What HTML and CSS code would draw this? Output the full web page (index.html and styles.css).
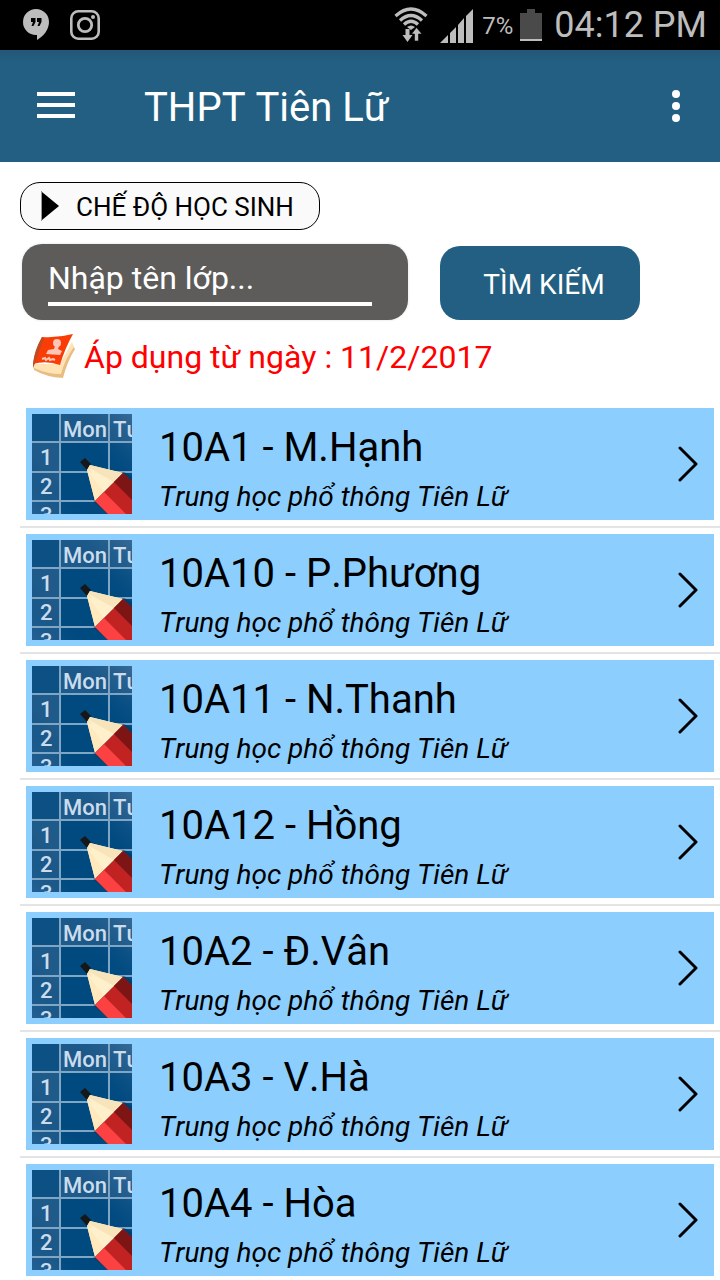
FILE: index.html
```html
<!DOCTYPE html>
<html lang="vi">
<head>
<meta charset="utf-8">
<meta name="viewport" content="width=device-width, initial-scale=1">
<title>THPT Tiên Lữ</title>
<link rel="stylesheet" href="styles.css">
</head>
<body>
<svg class="defs" width="0" height="0" aria-hidden="true">
  <defs>
    <linearGradient id="shade" x1="0" y1="1" x2="1" y2="0">
      <stop offset="0" stop-color="#27639a" stop-opacity=".6"/>
      <stop offset=".3" stop-color="#004a80" stop-opacity="0"/>
      <stop offset=".6" stop-color="#004a80" stop-opacity="0"/>
      <stop offset="1" stop-color="#3f6f99" stop-opacity=".8"/>
    </linearGradient>
    <symbol id="timetable" viewBox="0 0 100 100">
      <rect width="100" height="100" fill="#004a80"/>
      <rect x="28" width="72" height="27" fill="#2b618e" opacity=".7"/>
      <rect width="27" height="27" fill="#2b618e" opacity=".3"/>
      <rect y="28" width="27" height="72" fill="#2b618e" opacity=".7"/>
      <rect width="100" height="100" fill="url(#shade)"/>
      <path d="M28 0V100M77 0V100M0 28H100M0 58H100M0 87H100" stroke="#7fa6c4" stroke-width="2"/>
      <g class="thumb-text">
        <text x="31" y="23">Mon</text>
        <text x="81" y="23">Tu</text>
        <text x="8" y="51">1</text>
        <text x="8" y="80">2</text>
        <text x="8" y="109">3</text>
      </g>
      <path d="M56 57L62 88L76 100H100V62L92 58Z" fill="#002f55" opacity=".45"/>
      <path d="M48 48L53 44L59 50L55 56Z" fill="#15171a"/>
      <path d="M58 51L91 59L63 87L55 56Z" fill="#fff0cc"/>
      <path d="M58 51L91 59L80 70L55 56Z" fill="#f8e4bb"/>
      <path d="M55 56L72 78L63 87Z" fill="#ffe9bd"/>
      <path d="M57 54L82 68L72 78Z" fill="#fff0cc"/>
      <path d="M91 59L100 68V100H76L63 87Z" fill="#c12323"/>
      <path d="M91 59L100 67V86L82 68Z" fill="#7d1515"/>
      <path d="M63 87L72 78L94 100H76Z" fill="#fb4141"/>
    </symbol>
    <symbol id="chevron" viewBox="0 0 20 36">
      <path d="M2 2L18 18L2 34" fill="none" stroke="#000" stroke-width="3" stroke-linecap="round" stroke-linejoin="round"/>
    </symbol>
  </defs>
</svg>

<div class="status">
  <div class="status-group status-left">
    <svg width="26" height="32" viewBox="0 0 26 32"><path d="M13 0A13 13 0 0 0 13 26H14V31C21 27 26 20 26 13A13 13 0 0 0 13 0Z" fill="#bdbdbd"/><path d="M8 9H12.500V13L10.500 17H8.500L10 13H8ZM14 9H18.500V13L16.500 17H14.500L16 13H14Z" fill="#000"/></svg>
    <svg width="30" height="30" viewBox="0 0 30 30"><g fill="none" stroke="#bdbdbd"><rect x="1.300" y="1.300" width="27.400" height="27.400" rx="7" stroke-width="2.600"/><circle cx="15" cy="15" r="6.700" stroke-width="2.800"/></g><circle cx="23" cy="7" r="2" fill="#bdbdbd"/></svg>
  </div>
  <div class="status-group status-right">
    <svg class="wifi" width="34" height="36" viewBox="0 0 34 36"><g fill="none" stroke="#bdbdbd" stroke-width="3.200"><path d="M1.500 9Q17 -5 32.500 9"/><path d="M6 13.500Q17 3.500 28 13.500"/><path d="M10 17.500Q17 11 24 17.500"/></g><path d="M13 20Q17 17 21 20L17 23Z" fill="#bdbdbd"/><path d="M11.500 22H15.500V28H18.500L13.500 35L8.500 28H11.500Z" fill="#bdbdbd"/><path d="M20.500 34V27H17.500L22.500 20.500L28 27H24.500V34Z" fill="#bdbdbd" stroke="#000" stroke-width=".6"/></svg>
    <svg class="signal" width="34" height="34" viewBox="0 0 34 34"><path d="M0 34L8 26V34ZM10 24L16 18V34H10ZM18 16L24 9V34H18ZM26 7L33 0V34H26Z" fill="#bdbdbd"/></svg>
    <span class="percent">7%</span>
    <svg class="battery" width="22" height="32" viewBox="0 0 22 32"><path d="M7 0H15V4H22V30H0V4H7Z" fill="#4a4a4a"/><path d="M0 30H22V32H0Z" fill="#bdbdbd"/></svg>
    <time class="clock">04:12 PM</time>
  </div>
</div>

<header class="appbar">
  <button class="icon-button" aria-label="Menu"><svg width="38" height="28" viewBox="0 0 38 28"><path d="M0 2H38M0 13H38M0 24H38" stroke="#fff" stroke-width="4"/></svg></button>
  <h1 class="appbar-title">THPT Tiên Lữ</h1>
  <button class="icon-button" aria-label="Tùy chọn"><svg width="8" height="32" viewBox="0 0 8 32"><g fill="#fff"><circle cx="4" cy="4" r="4"/><circle cx="4" cy="16" r="4"/><circle cx="4" cy="28" r="4"/></g></svg></button>
</header>

<main>
  <section class="controls">
    <button class="mode"><svg width="20" height="32" viewBox="0 0 20 32"><path d="M2 1L19 15L2 29Z" fill="#000"/><path d="M1.500 0V30" stroke="#999"/></svg>CHẾ ĐỘ HỌC SINH</button>
    <form class="search">
      <div class="search-box"><input class="search-input" type="text" placeholder="Nhập tên lớp..." aria-label="Nhập tên lớp"></div>
      <button class="search-button" type="button">TÌM KIẾM</button>
    </form>
    <p class="notice"><svg width="44" height="44" viewBox="0 0 44 44"><path d="M1 30L2 36Q14 43 31 44Q35 28 43 15L40 10L28 33Z" fill="#e9bd82"/><path d="M1 30L2 34Q15 40 29 40Q33 25 42 13L40 8L28 30Z" fill="#ffe3b5"/><path d="M10 3Q26 4 41 0Q33 14 28 31Q14 26 1 30Q3 16 10 3Z" fill="#fa3c06"/><path d="M10 3Q2 17 1 30V34L3 29L12 4Z" fill="#bd4b24"/><circle cx="25" cy="9" r="4" fill="#ffc5b5"/><path d="M23 12H27L26 15L30 17L28 21L14 20L16 16L22 15Z" fill="#ffc5b5"/><path d="M10 25L13 24L14 26L17 24L18 26L21 25L23 26" fill="none" stroke="#ffc5b5" stroke-width="2"/></svg><span class="notice-text">Áp dụng từ ngày : 11/2/2017</span></p>
  </section>

  <ul class="classes">
    <li class="class-item"><a class="class-link" href="#10A1"><svg class="thumb"><use href="#timetable"/></svg><span class="class-text"><strong class="class-name">10A1 - M.Hạnh</strong><em class="school">Trung học phổ thông Tiên Lữ</em></span><svg class="chevron"><use href="#chevron"/></svg></a></li>
    <li class="class-item"><a class="class-link" href="#10A10"><svg class="thumb"><use href="#timetable"/></svg><span class="class-text"><strong class="class-name">10A10 - P.Phương</strong><em class="school">Trung học phổ thông Tiên Lữ</em></span><svg class="chevron"><use href="#chevron"/></svg></a></li>
    <li class="class-item"><a class="class-link" href="#10A11"><svg class="thumb"><use href="#timetable"/></svg><span class="class-text"><strong class="class-name">10A11 - N.Thanh</strong><em class="school">Trung học phổ thông Tiên Lữ</em></span><svg class="chevron"><use href="#chevron"/></svg></a></li>
    <li class="class-item"><a class="class-link" href="#10A12"><svg class="thumb"><use href="#timetable"/></svg><span class="class-text"><strong class="class-name">10A12 - Hồng</strong><em class="school">Trung học phổ thông Tiên Lữ</em></span><svg class="chevron"><use href="#chevron"/></svg></a></li>
    <li class="class-item"><a class="class-link" href="#10A2"><svg class="thumb"><use href="#timetable"/></svg><span class="class-text"><strong class="class-name">10A2 - Đ.Vân</strong><em class="school">Trung học phổ thông Tiên Lữ</em></span><svg class="chevron"><use href="#chevron"/></svg></a></li>
    <li class="class-item"><a class="class-link" href="#10A3"><svg class="thumb"><use href="#timetable"/></svg><span class="class-text"><strong class="class-name">10A3 - V.Hà</strong><em class="school">Trung học phổ thông Tiên Lữ</em></span><svg class="chevron"><use href="#chevron"/></svg></a></li>
    <li class="class-item"><a class="class-link" href="#10A4"><svg class="thumb"><use href="#timetable"/></svg><span class="class-text"><strong class="class-name">10A4 - Hòa</strong><em class="school">Trung học phổ thông Tiên Lữ</em></span><svg class="chevron"><use href="#chevron"/></svg></a></li>
  </ul>
</main>
</body>
</html>
```
FILE: styles.css
```css
* { box-sizing: border-box; }

body {
  margin: 0;
  background: #fff;
  color: #000;
  font-family: Roboto, "Noto Sans", sans-serif;
  font-kerning: none;
}

svg { display: block; flex: none; }

button, input { font-family: inherit; font-kerning: inherit; margin: 0; }

button { cursor: pointer; }

.defs { position: absolute; }

.status {
  display: flex;
  justify-content: space-between;
  align-items: center;
  height: 50px;
  padding: 0 13px 0 23px;
  background: #000;
  color: #bdbdbd;
}

.status-group { display: flex; align-items: center; }
.status-left { gap: 21px; }
.signal { margin: 2px 8px 0 12px; }
.battery { margin: 0 12px 0 7px; }
.percent { font-size: 24px; line-height: 48px; padding-top: 2px; }
.clock { font-size: 36px; line-height: 50px; }

.appbar {
  display: flex;
  align-items: center;
  height: 112px;
  padding: 0 24px 0 21px;
  background: linear-gradient(#245777, #235f82 12px);
  color: #fff;
}

.icon-button {
  display: flex;
  padding: 16px;
  border: 0;
  background: none;
}

.appbar-title {
  flex: 1;
  margin: 0 0 0 53px;
  padding-top: 4px;
  font-size: 40px;
  font-weight: 400;
  line-height: 48px;
}

.controls {
  display: flex;
  flex-direction: column;
  align-items: flex-start;
  padding: 20px 20px 0;
}

.mode {
  display: flex;
  align-items: center;
  gap: 16px;
  height: 48px;
  padding: 1px 25px 0 19px;
  border: 1px solid #000;
  border-radius: 20px;
  background: #fafafa;
  color: #000;
  font-size: 26px;
}

.search {
  display: flex;
  align-items: flex-end;
  gap: 32px;
  padding: 14px 0 14px 2px;
}

.search-box {
  padding: 10px 36px 14px 26px;
  border-radius: 20px;
  background: #5d5c5a;
  box-shadow: 0 0 2px 1px #f0f0f0;
}

.search-input {
  display: block;
  width: 324px;
  height: 52px;
  padding: 0;
  border: 0;
  border-bottom: 4px solid #fff;
  background: none;
  color: #fff;
  font-size: 32px;
  outline: none;
}

.search-input::placeholder { color: #fff; opacity: 1; }

.search-button {
  width: 200px;
  height: 74px;
  padding: 2px 0 0 8px;
  border: 0;
  border-radius: 20px;
  background: #235f82;
  color: #fff;
  font-size: 28px;
}

.notice {
  display: flex;
  align-items: center;
  gap: 8px;
  margin: 0;
  padding-left: 12px;
  color: #f00;
  font-size: 32px;
}

.notice-text { padding-top: 2px; line-height: 42px; }

.classes {
  margin: 0;
  padding: 24px 0 0 20px;
  list-style: none;
}

.class-item {
  padding: 6px;
  border-bottom: 2px solid #e4e4e4;
}

.class-item:last-child { padding-bottom: 4px; border-bottom: 0; }

.class-link {
  display: flex;
  align-items: center;
  padding: 6px 16px 6px 6px;
  background: #8ccfff;
  color: #000;
  text-decoration: none;
}

.thumb { width: 100px; height: 100px; }

.thumb-text {
  fill: #cbdcec;
  font-family: Roboto, sans-serif;
  font-size: 22px;
  font-weight: 500;
}

.class-text {
  display: flex;
  flex: 1;
  flex-direction: column;
  gap: 8px;
  margin-left: 27px;
  padding-top: 10px;
}

.class-name { font-size: 40px; font-weight: 400; line-height: 48px; }
.school { font-size: 28px; line-height: 34px; }
.chevron { width: 20px; height: 36px; }
```
